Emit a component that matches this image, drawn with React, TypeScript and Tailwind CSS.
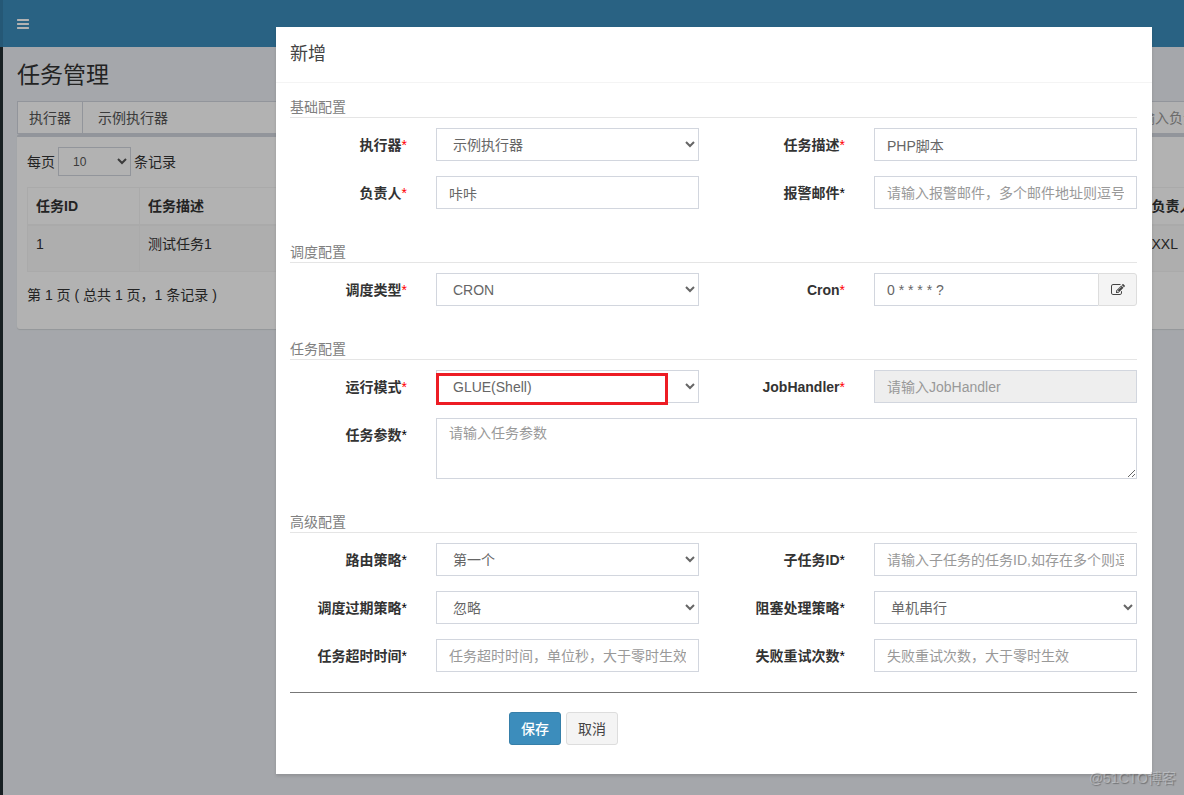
import { useId } from 'react';
import type { ReactNode } from 'react';

const control =
  'block h-[33px] w-full min-w-0 rounded-none border border-[#d2d6de] bg-white text-sm leading-5 text-[#666] placeholder:text-[#999] placeholder:opacity-100 outline-none';

function BarsIcon() {
  return (
    <svg viewBox="0 0 1792 1792" className="size-3.5 fill-current" aria-hidden="true">
      <path d="M1664 1344v128q0 26-19 45t-45 19h-1408q-26 0-45-19t-19-45v-128q0-26 19-45t45-19h1408q26 0 45 19t19 45zm0-512v128q0 26-19 45t-45 19h-1408q-26 0-45-19t-19-45v-128q0-26 19-45t45-19h1408q26 0 45 19t19 45zm0-512v128q0 26-19 45t-45 19h-1408q-26 0-45-19t-19-45v-128q0-26 19-45t45-19h1408q26 0 45 19t19 45z" />
    </svg>
  );
}

function EditIcon() {
  return (
    <svg viewBox="0 0 1792 1792" className="size-3.5 fill-current" aria-hidden="true">
      <path d="M888 1184l116-116-152-152-116 116v56h96v96h56zm440-720q-16-16-33 1l-350 350q-17 17-1 33t33-1l350-350q17-17 1-33zm80 594v190q0 119-84.5 203.5t-203.5 84.5h-832q-119 0-203.5-84.5t-84.5-203.5v-832q0-119 84.5-203.5t203.5-84.5h832q63 0 117 25 15 7 18 23 3 17-9 29l-49 49q-14 14-32 8-23-6-45-6h-832q-66 0-113 47t-47 113v832q0 66 47 113t113 47h832q66 0 113-47t47-113v-126q0-13 9-22l64-64q15-15 35-7t20 29zm-96-738l288 288-672 672h-288v-288zm444 132l-92 92-288-288 92-92q28-28 68-28t68 28l152 152q28 28 28 68t-28 68z" />
    </svg>
  );
}

function Section({ title, children }: { title: string; children: ReactNode }) {
  return (
    <section>
      <h5 className="mr-[15px] mb-[10px] ml-[14px] border-b border-[#e5e5e5] text-sm leading-5 text-[#808080]">{title}</h5>
      <div className="grid grid-cols-[1fr_2fr_1fr_2fr] gap-y-[15px]">{children}</div>
    </section>
  );
}

type FieldProps = {
  label: string;
  required?: boolean;
  wide?: boolean;
  children: (id: string) => ReactNode;
};

function Field({ label, required, wide, children }: FieldProps) {
  const id = useId();
  return (
    <>
      <label htmlFor={id} className="pt-[7px] pr-[15px] text-right text-sm leading-5 font-bold whitespace-nowrap text-[#333]">
        {label}
        <span className={required ? 'font-normal text-[#ff0000]' : 'font-normal text-black'}>*</span>
      </label>
      <div className={wide ? 'col-span-3 min-w-0 pr-[15px] pl-[14px]' : 'min-w-0 pr-[15px] pl-[14px]'}>{children(id)}</div>
    </>
  );
}

function TextField(props: { label: string; required?: boolean; value?: string; placeholder?: string; disabled?: boolean }) {
  return (
    <Field label={props.label} required={props.required}>
      {(id) => (
        <input
          id={id}
          type="text"
          defaultValue={props.value}
          placeholder={props.placeholder}
          disabled={props.disabled}
          className={`${control} px-3 disabled:bg-[#eee]`}
        />
      )}
    </Field>
  );
}

function SelectField(props: { label: string; required?: boolean; value: string; highlighted?: boolean }) {
  return (
    <Field label={props.label} required={props.required}>
      {(id) => (
        <div className="relative">
          <select id={id} className={`${control} px-3`}>
            <option>{props.value}</option>
          </select>
          {props.highlighted && (
            <div className="pointer-events-none absolute top-[3px] right-[31px] left-0 h-8 border-3 border-[#ed1c24]" />
          )}
        </div>
      )}
    </Field>
  );
}

function JobList() {
  return (
    <div className="flex min-h-screen bg-[#222d32]">
      <div className="w-[3px] shrink-0">
        <div className="h-[47px] bg-[#367fa9]" />
      </div>
      <div className="flex min-w-0 flex-1 flex-col bg-[#ecf0f5]">
        <header className="flex h-[47px] items-center bg-[#3c8dbc] pl-[13px] text-white">
          <button type="button" aria-label="菜单">
            <BarsIcon />
          </button>
        </header>
        <main className="pl-[14px]">
          <h1 className="pt-[13px] text-[23px] leading-[30px] text-[#333]">任务管理</h1>
          <div className="mt-[11px] flex h-[33px] overflow-hidden text-sm">
            <label
              htmlFor="group"
              className="flex shrink-0 items-center border border-r-0 border-[#d2d6de] bg-white px-[11px] text-[#555]"
            >
              执行器
            </label>
            <select id="group" className="min-w-0 flex-1 border border-[#d2d6de] bg-white px-[11px] text-[#555]">
              <option>示例执行器</option>
            </select>
            <input
              type="text"
              aria-label="负责人"
              placeholder="请输入负责人"
              className="w-[70px] shrink-0 border border-r-0 border-[#d2d6de] bg-white pl-3 placeholder:text-[#999]"
            />
          </div>
          <div className="rounded-l-[3px] border-t-3 border-[#d2d6de] bg-white pt-[10px] pb-[24px] pl-[10px] text-sm leading-5 text-[#333] shadow-[0_1px_1px_rgba(0,0,0,0.1)]">
            <label className="flex items-center gap-[3px]">
              每页
              <select className="h-[29px] w-[73px] border border-[#d2d6de] bg-white px-[10px] text-xs text-[#555]">
                <option>10</option>
              </select>
              条记录
            </label>
            <table className="mt-[11px] w-full table-fixed border-collapse border border-r-0 border-[#f4f4f4] text-left">
              <colgroup>
                <col className="w-[112px]" />
                <col />
                <col className="w-[41px]" />
              </colgroup>
              <thead>
                <tr className="border-b-2 border-[#f4f4f4]">
                  <th className="border-r border-[#f4f4f4] p-2 font-bold">任务ID</th>
                  <th className="p-2 font-bold">任务描述</th>
                  <th className="overflow-hidden border-l border-[#f4f4f4] p-2 pr-0 font-bold whitespace-nowrap">负责人</th>
                </tr>
              </thead>
              <tbody>
                <tr className="h-[46px] border-b border-[#f4f4f4] bg-[#f9f9f9] align-top">
                  <td className="border-r border-[#f4f4f4] p-2">1</td>
                  <td className="p-2">测试任务1</td>
                  <td className="border-l border-[#f4f4f4] p-2 pr-0">XXL</td>
                </tr>
              </tbody>
            </table>
            <p className="mt-[13px]">第 1 页 ( 总共 1 页，1 条记录 )</p>
          </div>
        </main>
      </div>
    </div>
  );
}

function JobDialog() {
  return (
    <div
      role="dialog"
      aria-modal="true"
      aria-labelledby="dialog-title"
      className="w-full bg-white shadow-[0_2px_3px_rgba(0,0,0,0.125)]"
    >
      <div className="border-b border-[#f4f4f4] px-[14px] py-[14px]">
        <h4 id="dialog-title" className="text-lg leading-[27px] text-[#444]">
          新增
        </h4>
      </div>
      <form className="pt-[14px] pb-[29px]" onSubmit={(event) => event.preventDefault()}>
        <div className="flex flex-col gap-[33px]">
          <Section title="基础配置">
            <SelectField label="执行器" required value="示例执行器" />
            <TextField label="任务描述" required value="PHP脚本" />
            <TextField label="负责人" required value="咔咔" />
            <TextField label="报警邮件" placeholder="请输入报警邮件，多个邮件地址则逗号分隔" />
          </Section>
          <Section title="调度配置">
            <SelectField label="调度类型" required value="CRON" />
            <Field label="Cron" required>
              {(id) => (
                <div className="flex">
                  <input id={id} type="text" defaultValue="0 * * * * ?" className={`${control} flex-1 border-r-0 px-3`} />
                  <button
                    type="button"
                    aria-label="编辑"
                    className="flex h-[33px] w-[39px] shrink-0 items-center justify-center rounded-r-[3px] border border-[#ddd] bg-[#f4f4f4] text-[#444]"
                  >
                    <EditIcon />
                  </button>
                </div>
              )}
            </Field>
          </Section>
          <Section title="任务配置">
            <SelectField label="运行模式" required value="GLUE(Shell)" highlighted />
            <TextField label="JobHandler" required placeholder="请输入JobHandler" disabled />
            <Field label="任务参数" wide>
              {(id) => (
                <textarea
                  id={id}
                  placeholder="请输入任务参数"
                  className="block h-[61px] w-full resize border border-[#d2d6de] bg-white px-3 py-1 text-sm leading-5 text-[#666] outline-none placeholder:text-[#999] placeholder:opacity-100"
                />
              )}
            </Field>
          </Section>
          <Section title="高级配置">
            <SelectField label="路由策略" value="第一个" />
            <TextField label="子任务ID" placeholder="请输入子任务的任务ID,如存在多个则逗号分隔" />
            <SelectField label="调度过期策略" value="忽略" />
            <SelectField label="阻塞处理策略" value="单机串行" />
            <TextField label="任务超时时间" placeholder="任务超时时间，单位秒，大于零时生效" />
            <TextField label="失败重试次数" placeholder="失败重试次数，大于零时生效" />
          </Section>
        </div>
        <hr className="mt-5 mr-[15px] mb-[19px] ml-[14px] border-t border-[#777]" />
        <div className="ml-[25%] flex gap-[5px] px-[14px] text-sm">
          <button type="submit" className="h-[33px] rounded-[3px] border border-[#367fa9] bg-[#3c8dbc] px-[11px] font-medium text-white">
            保存
          </button>
          <button type="button" className="h-[33px] rounded-[3px] border border-[#ddd] bg-[#f4f4f4] px-[11px] text-[#444]">
            取消
          </button>
        </div>
      </form>
    </div>
  );
}

export default function App() {
  return (
    <div className="relative min-h-screen overflow-x-hidden font-['Liberation_Sans','Noto_Sans_CJK_SC',sans-serif]">
      <JobList />
      <div className="absolute inset-0 flex items-start bg-black/30 pt-[27px] pr-8 pl-[276px]">
        <JobDialog />
      </div>
      <p className="pointer-events-none absolute right-2 bottom-[7px] text-sm leading-5 text-white/30 [text-shadow:1px_1px_1px_rgba(0,0,0,0.3)]">
        @51CTO博客
      </p>
    </div>
  );
}
